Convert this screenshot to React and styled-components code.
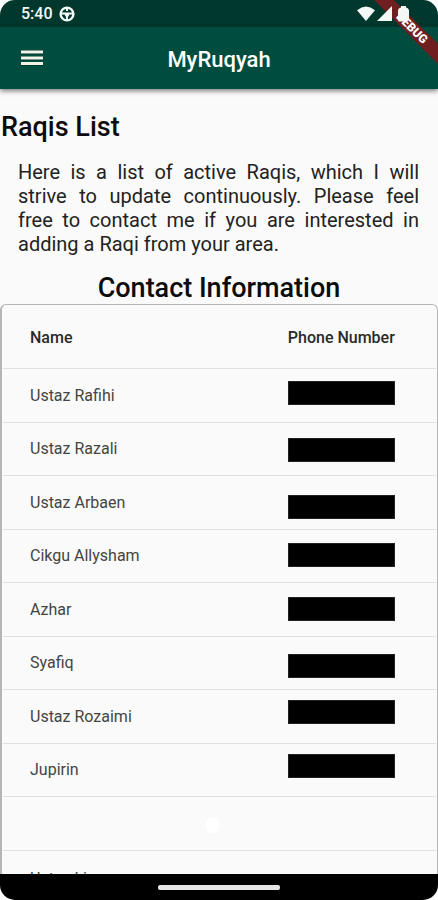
import React from "react";
import styled, { createGlobalStyle } from "styled-components";

const GlobalStyle = createGlobalStyle`
  *, *::before, *::after { box-sizing: border-box; }
  body {
    margin: 0;
    background: #fff;
    font-family: Roboto, "Noto Sans", sans-serif;
    color: #0c0c0c;
  }
`;

const Screen = styled.div`
  position: relative;
  display: flex;
  flex-direction: column;
  height: 100vh;
  overflow: hidden;
  border-radius: 15px;
  background: #fafafa;
`;

const StatusBar = styled.div`
  display: flex;
  flex: none;
  align-items: center;
  justify-content: space-between;
  height: 27px;
  padding: 0 29px 0 21px;
  background: #00382e;
  color: #f4f8f6;
`;

const StatusGroup = styled.div`
  display: flex;
  align-items: center;
  gap: 6px;
`;

const Clock = styled.time`
  font-size: 16px;
  font-weight: 500;
  line-height: 28px;
`;

const AppBar = styled.header`
  position: relative;
  display: grid;
  flex: none;
  grid-template-columns: 64px 1fr 64px;
  align-items: center;
  height: 62px;
  background: #004d40;
  box-shadow: 0 2px 5px rgba(0, 0, 0, 0.5);
`;

const MenuButton = styled.button`
  display: flex;
  align-items: center;
  justify-content: center;
  width: 64px;
  height: 62px;
  padding: 0;
  border: 0;
  background: none;
  color: #f1f3e6;
`;

const AppTitle = styled.div`
  padding-top: 4px;
  color: #fff;
  font-size: 22px;
  font-weight: 500;
  line-height: 28px;
  text-align: center;
`;

const Ribbon = styled.div`
  position: absolute;
  top: 21px;
  right: -34px;
  width: 120px;
  height: 14px;
  background: #701f20;
  color: #fff;
  font-size: 12px;
  font-weight: 900;
  line-height: 14px;
  text-align: center;
  transform: rotate(45deg);
`;

const StatusIcons = styled.div`
  position: relative;
  z-index: 1;
  display: flex;
  align-items: center;
  gap: 2px;

  svg:last-child {
    margin-left: 4px;
  }
`;

const Content = styled.main`
  display: flex;
  flex: 1;
  flex-direction: column;
  min-height: 0;
  overflow: hidden;
`;

const PageTitle = styled.h1`
  flex: none;
  margin: 22px 0 0 1px;
  font-size: 27px;
  font-weight: 500;
  line-height: 32px;
`;

const Intro = styled.p`
  flex: none;
  margin: 17px 19px 0 18px;
  color: #222;
  font-size: 20px;
  font-weight: 400;
  line-height: 24px;
  text-align: justify;
`;

const SectionTitle = styled.h2`
  flex: none;
  margin: 16px 0 0;
  font-size: 27px;
  font-weight: 500;
  line-height: 32px;
  text-align: center;
`;

const TableCard = styled.div`
  flex: none;
  padding: 0 1px;
  border: 1px solid #b5b5b5;
  border-left-width: 2px;
  border-radius: 6px;
`;

const Table = styled.table`
  width: 100%;
  border-collapse: separate;
  border-spacing: 0;
  table-layout: fixed;
`;

const HeadCell = styled.th`
  width: ${(p) => p.$width};
  height: 64px;
  padding: 2px 0 0 ${(p) => p.$indent}px;
  border-bottom: 1px solid #e0e0e0;
  color: #2a2a2a;
  font-size: 16px;
  font-weight: 500;
  text-align: left;
`;

const Row = styled.tr`
  height: 53px;

  &:nth-child(odd) {
    height: 54px;
  }

  &:last-child {
    height: 56px;
  }
`;

const Cell = styled.td`
  padding: 0 0 0 ${(p) => p.$indent}px;
  border-bottom: 1px solid #e0e0e0;
  color: #444;
  font-size: 16px;
  line-height: 20px;
  vertical-align: ${(p) => p.$align || "middle"};
`;

const Redaction = styled.div`
  width: 107px;
  height: 24px;
  margin-top: ${(p) => p.$drop}px;
  border: 1px solid #222;
  background: #000;
`;

const SpotCell = styled(Cell)`
  padding-right: 14px;
`;

const Spot = styled.div`
  width: 13px;
  height: 16px;
  margin: 2px auto 0;
  border-radius: 6px;
  background: #fff;
`;

const NavBar = styled.footer`
  display: flex;
  flex: none;
  align-items: center;
  justify-content: center;
  height: 26px;
  background: #000;
`;

const HomeHandle = styled.div`
  width: 28%;
  height: 5px;
  border-radius: 2px;
  background: #e6e6e6;
`;

const contacts = [
  { name: "Ustaz Rafihi", drop: 12 },
  { name: "Ustaz Razali", drop: 15 },
  { name: "Ustaz Arbaen", drop: 19 },
  { name: "Cikgu Allysham", drop: 13 },
  { name: "Azhar", drop: 14 },
  { name: "Syafiq", drop: 17 },
  { name: "Ustaz Rozaimi", drop: 10 },
  { name: "Jupirin", drop: 10 },
];

const WheelIcon = () => (
  <svg width="16" height="16" viewBox="0 0 16 16" fill="none" stroke="currentColor" aria-hidden="true">
    <circle cx="8" cy="8" r="6.4" strokeWidth="2.4" />
    <path d="M2 7.5h12M8 8v6M8 2v3" strokeWidth="2" />
    <path d="M5 7h6L9.5 10.5h-3z" fill="currentColor" stroke="none" />
  </svg>
);

const WifiIcon = () => (
  <svg width="18" height="15" viewBox="0 0 18 15" fill="currentColor" aria-hidden="true">
    <path d="M0 4.2Q9-3.2 18 4.2L9 15z" />
  </svg>
);

const SignalIcon = () => (
  <svg width="15" height="15" viewBox="0 0 15 15" fill="currentColor" aria-hidden="true">
    <path d="M15 0v15H0z" />
  </svg>
);

const BatteryIcon = () => (
  <svg width="11" height="16" viewBox="0 0 11 16" fill="currentColor" aria-hidden="true">
    <path d="M3 0h5v1.5Q11 2 11 5v7.5L9.5 15.5H1.5Q0 15.5 0 14V5Q0 2 3 1.5z" />
  </svg>
);

const MenuIcon = () => (
  <svg width="22" height="16" viewBox="0 0 22 16" aria-hidden="true">
    <path d="M0 2.5h22M0 8.5h22M0 14h22" stroke="#002f26" strokeWidth="3.6" />
    <path d="M0 2h22M0 8h22M0 13.5h22" stroke="currentColor" strokeWidth="2.8" />
  </svg>
);

export default function App() {
  return (
    <>
      <GlobalStyle />
      <Screen>
        <StatusBar>
          <StatusGroup>
            <Clock>5:40</Clock>
            <WheelIcon />
          </StatusGroup>
          <StatusIcons>
            <WifiIcon />
            <SignalIcon />
            <BatteryIcon />
          </StatusIcons>
        </StatusBar>
        <AppBar>
          <MenuButton type="button" aria-label="Open menu">
            <MenuIcon />
          </MenuButton>
          <AppTitle>MyRuqyah</AppTitle>
        </AppBar>
        <Content>
          <PageTitle>Raqis List</PageTitle>
          <Intro>
            Here is a list of active Raqis, which I will strive to update
            continuously. Please feel free to contact me if you are interested
            in adding a Raqi from your area.
          </Intro>
          <SectionTitle>Contact Information</SectionTitle>
          <TableCard>
            <Table>
              <thead>
                <tr>
                  <HeadCell $width="60%" $indent={27}>Name</HeadCell>
                  <HeadCell $width="40%" $indent={25}>Phone Number</HeadCell>
                </tr>
              </thead>
              <tbody>
                {contacts.map((c) => (
                  <Row key={c.name}>
                    <Cell $indent={27}>{c.name}</Cell>
                    <Cell $indent={25} $align="top">
                      <Redaction $drop={c.drop} />
                    </Cell>
                  </Row>
                ))}
                <Row>
                  <SpotCell $indent={0} colSpan={2}>
                    <Spot />
                  </SpotCell>
                </Row>
                <Row>
                  <Cell $indent={27}>Ustaz Li</Cell>
                  <Cell $indent={25} />
                </Row>
              </tbody>
            </Table>
          </TableCard>
        </Content>
        <NavBar>
          <HomeHandle />
        </NavBar>
        <Ribbon>DEBUG</Ribbon>
      </Screen>
    </>
  );
}
